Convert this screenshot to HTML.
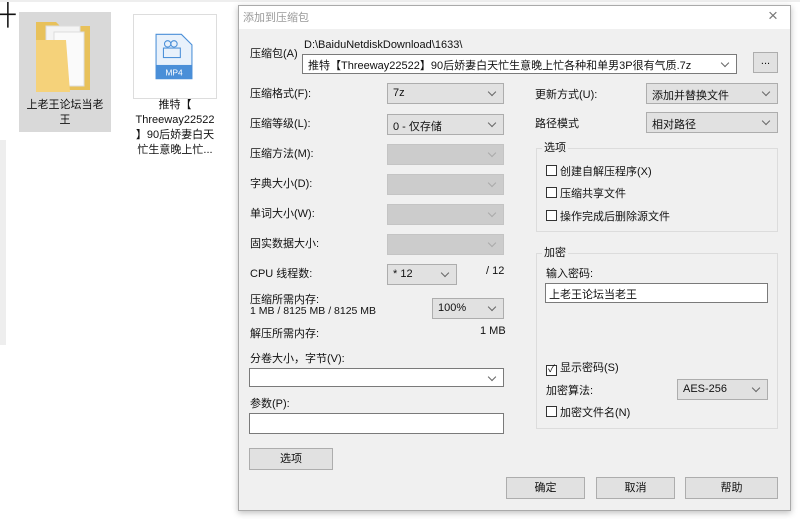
<!DOCTYPE html>
<html><head><meta charset="utf-8"><style>
*{box-sizing:border-box;margin:0;padding:0}
body{width:800px;height:519px;background:#fff;position:relative;overflow:hidden;font-family:"Liberation Sans","Noto Sans CJK SC",sans-serif;font-size:11px;color:#111}
.a{position:absolute;white-space:nowrap}
.l{transform:translateY(-3px)}
.sel{position:absolute;border:1px solid #adadad;background:#e1e1e1;height:21px;padding:3px 5px;font-size:11px}
.sel.dis{background:#ccc;border-color:#c4c4c4}
.sel.w{background:#fff;border-color:#7a7a7a}
.sel::after{content:"";position:absolute;right:8px;top:5px;width:5px;height:5px;border-right:1px solid #666;border-bottom:1px solid #666;transform:rotate(45deg)}
.sel.dis::after{border-color:#aaa}
.btn{position:absolute;border:1px solid #adadad;background:#e1e1e1;height:22px;text-align:center;line-height:20px;font-size:11px}
.cb{display:inline-block;width:11px;height:11px;border:1px solid #333;background:#fff;vertical-align:-1px;margin-right:3px;position:relative}
.grp{position:absolute;border:1px solid #dcdcdc}
</style></head><body>
<div class="a" style="left:0;top:6px;font-size:22px;line-height:16px;font-weight:300">┼</div>
<div class="a" style="left:0;top:0;width:800px;height:2px;background:#eee"></div>
<div class="a" style="left:0;top:140px;width:6px;height:205px;background:#eee"></div>
<div class="a" style="left:19px;top:12px;width:92px;height:120px;background:#d9d9d9"></div>
<svg class="a" style="left:34px;top:20px" width="60" height="76" viewBox="0 0 60 76"><path d="M2 2h20l4 4h30v64H2z" fill="#e8c15a"/><path d="M12 6h34v56H12z" fill="#f4f4f4" stroke="#ddd"/><path d="M20 12h30v54H20z" fill="#fafafa" stroke="#ddd"/><path d="M2 20h30l4 52H2z" fill="#f5d27a"/></svg>
<div class="a" style="left:19px;top:98px;width:92px;text-align:center;white-space:normal;line-height:15px;font-size:11px">上老王论坛当老<br>王</div>
<div class="a" style="left:133px;top:14px;width:84px;height:85px;border:1px solid #ddd"></div>
<svg class="a" style="left:155px;top:33px" width="38" height="47" viewBox="0 0 36 44"><path d="M1 1h24l10 10v32H1z" fill="#e8f1fb" stroke="#4a8fd8"/><rect x="1" y="30" width="34" height="13" fill="#4a8fd8"/><circle cx="12" cy="10" r="3" fill="none" stroke="#4a8fd8"/><circle cx="18" cy="10" r="3" fill="none" stroke="#4a8fd8"/><rect x="8" y="14" width="16" height="9" fill="none" stroke="#4a8fd8"/><text x="18" y="40" font-size="8" fill="#fff" text-anchor="middle" font-family="Liberation Sans">MP4</text></svg>
<div class="a" style="left:126px;top:98px;width:98px;text-align:center;white-space:normal;line-height:15px;font-size:11px">推特【<br>Threeway22522<br>】90后娇妻白天<br>忙生意晚上忙...</div>

<div class="a" style="left:238px;top:5px;width:553px;height:506px;background:#f0f0f0;border:1px solid #aaa;box-shadow:0 2px 6px rgba(0,0,0,.25)"></div>
<div class="a" style="left:239px;top:6px;width:551px;height:23px;background:#fff"></div>
<div class="a" style="left:243px;top:9px;color:#999;font-size:11px">添加到压缩包</div>
<div class="a" style="left:768px;top:6px;color:#777;font-size:17px">×</div>

<div class="a l" style="left:250px;top:48px">压缩包(A)</div>
<div class="a" style="left:304px;top:39px">D:\BaiduNetdiskDownload\1633\</div>
<div class="sel w" style="left:302px;top:54px;width:435px;height:20px;padding-top:2px">推特【Threeway22522】90后娇妻白天忙生意晚上忙各种和单男3P很有气质.7z</div>
<div class="btn" style="left:753px;top:52px;width:25px;height:21px;line-height:17px">...</div>

<div class="a l" style="left:250px;top:88px">压缩格式(F):</div>
<div class="sel" style="left:387px;top:83px;width:117px">7z</div>
<div class="a l" style="left:250px;top:118px">压缩等级(L):</div>
<div class="sel" style="left:387px;top:114px;width:117px">0 - 仅存储</div>
<div class="a l" style="left:250px;top:148px">压缩方法(M):</div>
<div class="sel dis" style="left:387px;top:144px;width:117px"></div>
<div class="a l" style="left:250px;top:178px">字典大小(D):</div>
<div class="sel dis" style="left:387px;top:174px;width:117px"></div>
<div class="a l" style="left:250px;top:208px">单词大小(W):</div>
<div class="sel dis" style="left:387px;top:204px;width:117px"></div>
<div class="a l" style="left:250px;top:238px">固实数据大小:</div>
<div class="sel dis" style="left:387px;top:234px;width:117px"></div>
<div class="a l" style="left:250px;top:268px">CPU 线程数:</div>
<div class="sel" style="left:387px;top:264px;width:70px">* 12</div>
<div class="a l" style="left:486px;top:268px">/ 12</div>
<div class="a l" style="left:250px;top:294px">压缩所需内存:</div>
<div class="a l" style="left:250px;top:308px;font-size:10.5px">1 MB / 8125 MB / 8125 MB</div>
<div class="sel" style="left:432px;top:298px;width:72px">100%</div>
<div class="a l" style="left:250px;top:328px">解压所需内存:</div>
<div class="a l" style="left:480px;top:328px">1 MB</div>
<div class="a l" style="left:250px;top:353px">分卷大小，字节(V):</div>
<div class="sel w" style="left:249px;top:368px;width:255px;height:19px"></div>
<div class="a l" style="left:250px;top:398px">参数(P):</div>
<div class="a" style="left:249px;top:413px;width:255px;height:21px;background:#fff;border:1px solid #7a7a7a"></div>
<div class="btn" style="left:249px;top:448px;width:84px">选项</div>

<div class="a l" style="left:535px;top:89px">更新方式(U):</div>
<div class="sel" style="left:646px;top:83px;width:132px">添加并替换文件</div>
<div class="a l" style="left:535px;top:118px">路径模式</div>
<div class="sel" style="left:646px;top:112px;width:132px">相对路径</div>
<div class="grp" style="left:536px;top:148px;width:242px;height:84px"></div>
<div class="a l" style="left:542px;top:142px;background:#f0f0f0;padding:0 2px">选项</div>
<div class="a l" style="left:546px;top:166px"><span class="cb"></span>创建自解压程序(X)</div>
<div class="a l" style="left:546px;top:188px"><span class="cb"></span>压缩共享文件</div>
<div class="a l" style="left:546px;top:211px"><span class="cb"></span>操作完成后删除源文件</div>
<div class="grp" style="left:536px;top:253px;width:242px;height:176px"></div>
<div class="a l" style="left:542px;top:247px;background:#f0f0f0;padding:0 2px">加密</div>
<div class="a l" style="left:546px;top:268px">输入密码:</div>
<div class="a" style="left:545px;top:283px;width:223px;height:20px;background:#fff;border:1px solid #7a7a7a;padding:2px 3px">上老王论坛当老王</div>
<div class="a l" style="left:546px;top:362px"><span class="cb" style="text-align:center;line-height:8px;font-size:10px">✓</span>显示密码(S)</div>
<div class="a l" style="left:546px;top:385px">加密算法:</div>
<div class="sel" style="left:677px;top:379px;width:91px">AES-256</div>
<div class="a l" style="left:546px;top:407px"><span class="cb"></span>加密文件名(N)</div>

<div class="btn" style="left:506px;top:477px;width:79px">确定</div>
<div class="btn" style="left:596px;top:477px;width:79px">取消</div>
<div class="btn" style="left:685px;top:477px;width:93px">帮助</div>
</body></html>
